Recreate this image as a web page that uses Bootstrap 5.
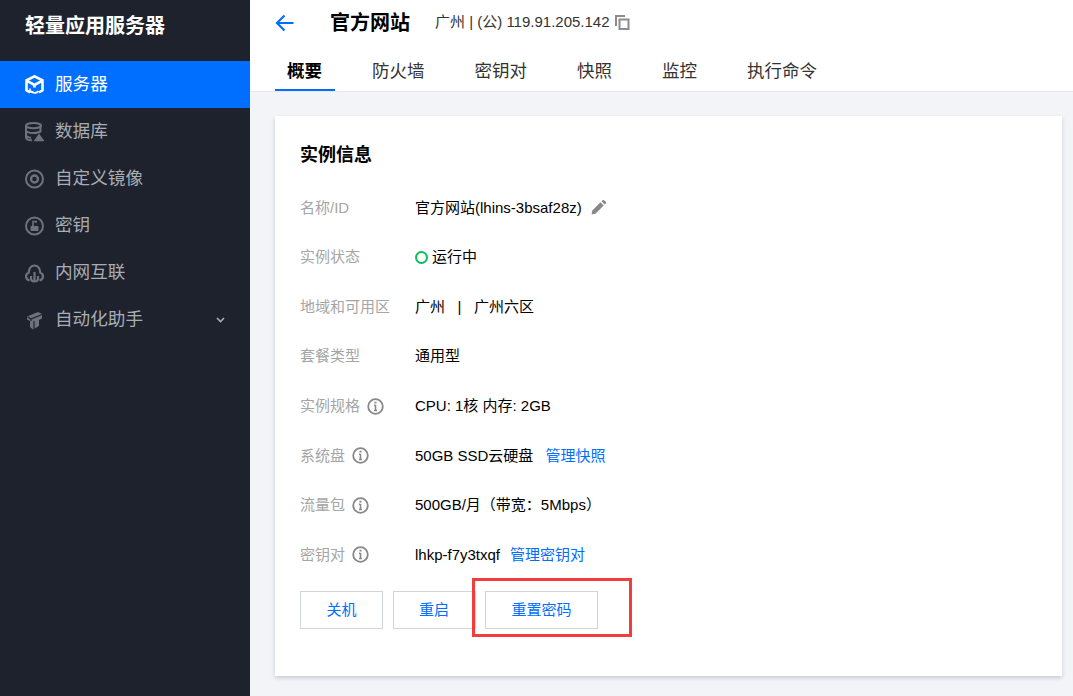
<!DOCTYPE html>
<html lang="zh-CN">
<head>
  <meta charset="UTF-8">
  <title>轻量应用服务器</title>
  <meta name="viewport" content="width=device-width, initial-scale=1">
  <link href="https://cdn.jsdelivr.net/npm/bootstrap@5.3.3/dist/css/bootstrap.min.css" rel="stylesheet">
  <style>
    html, body {
      height: 100%;
      overflow: hidden;
    }
    body {
      font-family: "Liberation Sans", "Noto Sans CJK SC", sans-serif;
      font-size: 15px;
      background-color: #f2f4f8;
      color: #000;
    }
    .side-bar {
      width: 250px;
      flex: none;
      background-color: #1e222d;
      color: #a8adb5;
    }
    .side-title {
      height: 61px;
      padding: 12px 0 0 25px;
      font-size: 20px;
      font-weight: 700;
      line-height: 28px;
      color: #fff;
    }
    .side-link {
      height: 47px;
      padding: 0 25px;
      gap: 11px;
      font-size: 17.6px;
      color: #a8adb5;
    }
    .side-link.active {
      background-color: #006eff;
      color: #fff;
    }
    .side-link svg {
      flex: none;
    }
    .top-head {
      height: 92px;
      padding-left: 25px;
      border-bottom: 1px solid #e6e9ef;
    }
    .head-row {
      height: 45px;
    }
    .head-title {
      margin-left: 36px;
      font-size: 20px;
      font-weight: 700;
      line-height: 28px;
    }
    .head-sub {
      margin-left: 25px;
      color: #333;
    }
    .copy-icon {
      margin-left: 5px;
    }
    .tab-item {
      height: 46px;
      padding: 8px 12px 0;
      margin-right: 26px;
      font-size: 17.5px;
      line-height: 36px;
      color: #333;
      border-bottom: 2px solid transparent;
    }
    .tab-item.active {
      padding-right: 12.5px;
      margin-right: 25.5px;
      font-weight: 700;
      color: #000;
      border-bottom-color: #006eff;
    }
    .info-card {
      width: 787px;
      height: 560px;
      margin: 24px 0 0 25px;
      padding: 27px 25px 0;
      border: 0;
      border-radius: 0;
      box-shadow: 0 2px 4px rgba(54, 58, 80, 0.22);
    }
    .info-head {
      font-size: 18px;
      font-weight: 700;
      line-height: 24px;
      margin-bottom: 16px;
    }
    .info-row {
      height: 49.6px;
    }
    .info-label {
      width: 115px;
      gap: 7px;
      color: #a5a5a5;
    }
    .info-link {
      color: #006eff;
      text-decoration: none;
    }
    .link-near {
      margin-left: 10px;
    }
    .link-far {
      margin-left: 12px;
    }
    .status-dot {
      width: 13px;
      height: 13px;
      margin-right: 4px;
      border: 2px solid #0abf5b;
      border-radius: 50%;
    }
    .act-wrap {
      margin-top: 11px;
      gap: 9.5px;
    }
    .act-btn {
      height: 38px;
      padding: 0 25.5px;
      font-size: 15px;
      color: #006eff;
      background: #fff;
      border: 1px solid #cfd5de;
      border-radius: 0;
    }
    .mark-box {
      position: absolute;
      left: 472px;
      top: 578px;
      width: 160px;
      height: 59px;
      border: 3px solid #f33c3c;
    }
  </style>
</head>
<body>
  <div class="d-flex h-100 position-relative">
    <aside class="side-bar">
      <div class="side-title">轻量应用服务器</div>
      <nav class="nav flex-column">
        <a class="nav-link side-link active d-flex align-items-center" href="#">
          <svg width="19" height="20" viewBox="0 0 19 20" fill="none" stroke="#fff" stroke-width="2.6"><path d="M5 17.500L1.500 15.300V5.300L9.500 1.300l8 4v10l-3.500 2.200"/><path d="M2 5.800l7.500 4.200 7.500-4.200M9.500 10v2.500"/><path d="M6 16c2 2.600 5.500 2.600 7.500.2" stroke-width="1.800"/><path d="M5 13.500v3.500h3.500" stroke-width="1.600"/></svg>
          <span>服务器</span>
        </a>
        <a class="nav-link side-link d-flex align-items-center" href="#">
          <svg width="19" height="20" viewBox="0 0 19 20" fill="none" stroke="#6d737d" stroke-width="2"><ellipse cx="8.500" cy="3.600" rx="7.500" ry="2.600"/><path d="M1 3.600v11.600c0 1.800 2.400 3 6 3"/><path d="M1 8.200c0 1.700 3 2.800 7.500 2.800 3 0 5.600-.5 7-1.600V3.600"/><path d="M1 13c0 1.400 2 2.400 5 2.700"/><path d="M10.500 18.200h7l-3.500-5z" fill="#6d737d"/></svg>
          <span>数据库</span>
        </a>
        <a class="nav-link side-link d-flex align-items-center" href="#">
          <svg width="19" height="20" viewBox="0 0 19 20" fill="none" stroke="#6d737d" stroke-width="2"><circle cx="9.500" cy="10" r="8.500"/><circle cx="9.500" cy="10" r="3.500" stroke-width="2.400"/></svg>
          <span>自定义镜像</span>
        </a>
        <a class="nav-link side-link d-flex align-items-center" href="#">
          <svg width="19" height="20" viewBox="0 0 19 20" fill="none" stroke="#6d737d" stroke-width="2"><circle cx="9.500" cy="10" r="8.500"/><path d="M6 14.500h7v-4H6z" fill="#6d737d" stroke-width="1"/><path d="M8 10V5.500h3V7" stroke-width="1.600"/></svg>
          <span>密钥</span>
        </a>
        <a class="nav-link side-link d-flex align-items-center" href="#">
          <svg width="19" height="20" viewBox="0 0 19 20" fill="none" stroke="#6d737d" stroke-width="2.200"><path d="M4.500 17.500C2.500 16.800 1 15.300 1 13.300c0-2 1.200-3.200 2.700-3.600C4 5.500 6.300 2.500 9.500 2.500s5.500 3 5.800 7.200c1.500.4 2.700 1.600 2.700 3.600 0 2-1.500 3.500-3.500 4.200"/><path d="M6 13v2.500c0 2 1.500 3 3.500 3s3.500-1 3.500-3V13"/><path d="M9.500 9v9"/></svg>
          <span>内网互联</span>
        </a>
        <a class="nav-link side-link d-flex align-items-center" href="#">
          <svg width="19" height="20" viewBox="0 0 19 20"><path d="M2 6.500L13 2l4 2v4.500L14 10v6l-6 3.500L5 17v-6L2 9.500z" fill="#6d737d"/><path d="M2.500 6.800L6 9l11-4.500M9 11v8M6 9v2" fill="none" stroke="#1e222d" stroke-width="1.200"/></svg>
          <span class="flex-grow-1">自动化助手</span>
          <svg width="9" height="6" viewBox="0 0 9 6" fill="none" stroke="#a8adb5" stroke-width="1.600"><path d="M1 1l3.500 3.500L8 1"/></svg>
        </a>
      </nav>
    </aside>

    <main class="flex-grow-1">
      <header class="top-head bg-white">
        <div class="head-row d-flex align-items-center">
          <svg width="19" height="18" viewBox="0 0 19 18" fill="none" stroke="#006eff" stroke-width="2.200"><path d="M18.500 9H2M9.500 1.500L2 9l7.500 7.500"/></svg>
          <span class="head-title">官方网站</span>
          <span class="head-sub">广州 | (公) 119.91.205.142</span>
          <svg class="copy-icon" width="15" height="15" viewBox="0 0 15 15" fill="none" stroke="#8c8c8c" stroke-width="2"><path d="M1 11V1h9"/><path d="M4.500 4.500H13.500V14H4.500z"/></svg>
        </div>
        <div class="d-flex">
          <div class="tab-item active">概要</div>
          <div class="tab-item">防火墙</div>
          <div class="tab-item">密钥对</div>
          <div class="tab-item">快照</div>
          <div class="tab-item">监控</div>
          <div class="tab-item">执行命令</div>
        </div>
      </header>

      <section class="card info-card">
        <div class="info-head">实例信息</div>
        <div class="info-row d-flex align-items-center">
          <div class="info-label">名称/ID</div>
          <div>官方网站(lhins-3bsaf28z)</div>
          <svg class="ms-2" width="17" height="17" viewBox="0 0 17 17" fill="#888"><path d="M1.500 15.500l.8-4L10.500 3.300l3.200 3.200-8.200 8.200z"/><path d="M11.500 2.300l1.200-1.100a1 1 0 0 1 1.400 0l1.800 1.800a1 1 0 0 1 0 1.400l-1.200 1.100z"/></svg>
        </div>
        <div class="info-row d-flex align-items-center">
          <div class="info-label">实例状态</div>
          <span class="status-dot"></span>
          <div>运行中</div>
        </div>
        <div class="info-row d-flex align-items-center">
          <div class="info-label">地域和可用区</div>
          <div>广州 &nbsp;&nbsp;|&nbsp;&nbsp; 广州六区</div>
        </div>
        <div class="info-row d-flex align-items-center">
          <div class="info-label">套餐类型</div>
          <div>通用型</div>
        </div>
        <div class="info-row d-flex align-items-center">
          <div class="info-label d-flex align-items-center">实例规格
            <svg width="17" height="17" viewBox="0 0 17 17" fill="none" stroke="#888" stroke-width="1.800"><circle cx="8.500" cy="8.500" r="7.300"/><path d="M8.500 7v5.500M7 12.500h3M7 7.200h1.500" stroke-width="1.600"/><path d="M8.500 3.700v1.800" stroke-width="2"/></svg>
          </div>
          <div>CPU: 1核 内存: 2GB</div>
        </div>
        <div class="info-row d-flex align-items-center">
          <div class="info-label d-flex align-items-center">系统盘
            <svg width="17" height="17" viewBox="0 0 17 17" fill="none" stroke="#888" stroke-width="1.800"><circle cx="8.500" cy="8.500" r="7.300"/><path d="M8.500 7v5.500M7 12.500h3M7 7.200h1.500" stroke-width="1.600"/><path d="M8.500 3.700v1.800" stroke-width="2"/></svg>
          </div>
          <div>50GB SSD云硬盘</div>
          <a class="info-link link-far" href="#">管理快照</a>
        </div>
        <div class="info-row d-flex align-items-center">
          <div class="info-label d-flex align-items-center">流量包
            <svg width="17" height="17" viewBox="0 0 17 17" fill="none" stroke="#888" stroke-width="1.800"><circle cx="8.500" cy="8.500" r="7.300"/><path d="M8.500 7v5.500M7 12.500h3M7 7.200h1.500" stroke-width="1.600"/><path d="M8.500 3.700v1.800" stroke-width="2"/></svg>
          </div>
          <div>500GB/月（带宽：5Mbps）</div>
        </div>
        <div class="info-row d-flex align-items-center">
          <div class="info-label d-flex align-items-center">密钥对
            <svg width="17" height="17" viewBox="0 0 17 17" fill="none" stroke="#888" stroke-width="1.800"><circle cx="8.500" cy="8.500" r="7.300"/><path d="M8.500 7v5.500M7 12.500h3M7 7.200h1.500" stroke-width="1.600"/><path d="M8.500 3.700v1.800" stroke-width="2"/></svg>
          </div>
          <div>lhkp-f7y3txqf</div>
          <a class="info-link link-near" href="#">管理密钥对</a>
        </div>
        <div class="act-wrap d-flex">
          <button type="button" class="btn act-btn">关机</button>
          <button type="button" class="btn act-btn">重启</button>
          <button type="button" class="btn act-btn">重置密码</button>
        </div>
      </section>
    </main>
    <div class="mark-box"></div>
  </div>
  <script src="https://cdn.jsdelivr.net/npm/bootstrap@5.3.3/dist/js/bootstrap.bundle.min.js"></script>
</body>
</html>
